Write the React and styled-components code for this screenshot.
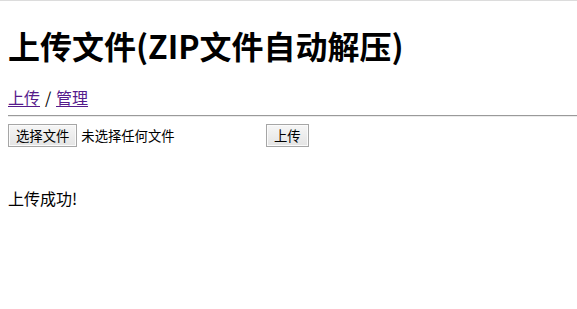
import React from 'react';
import styled, { createGlobalStyle } from 'styled-components';

const GlobalStyle = createGlobalStyle`
    html, body {
        margin: 0;
        padding: 0;
        background: #fff;
    }
    body {
        font-family: "Noto Sans CJK SC", "Noto Sans", sans-serif;
        color: #000;
    }
`;

const Page = styled.div`
    border-top: 1px solid #dcdcdc;
    padding: 0 8px;
`;

const Title = styled.h1`
    margin: 25.5px 0 23px;
    font-size: 32px;
    line-height: 37px;
    font-weight: 700;
`;

const Nav = styled.div`
    font-size: 16px;
    line-height: 20px;
`;

const NavLink = styled.a`
    color: #551a8b;
    text-decoration: underline;
    text-underline-offset: 2px;
`;

const Separator = styled.span`
    display: inline-block;
    width: 16px;
    text-align: center;
`;

const Rule = styled.hr`
    margin: 8.5px -8px 7px 0;
    height: 0;
    border: 0;
    border-top: 1px solid #9a9a9a;
    border-bottom: 1px solid #ececec;
`;

const Form = styled.form`
    display: flex;
    align-items: center;
    gap: 4px;
    height: 23px;
`;

const FilePicker = styled.label`
    display: flex;
    align-items: center;
    gap: 4px;
    width: 254px;
    font-size: 13.33px;
    cursor: pointer;

    input {
        display: none;
    }
`;

const Button = styled.span`
    box-sizing: border-box;
    display: inline-flex;
    align-items: center;
    justify-content: center;
    height: 23px;
    padding: 0 7px;
    margin: 0;
    font-family: inherit;
    font-size: 13.33px;
    line-height: 17px;
    color: #000;
    background: linear-gradient(#f6f6f6, #e4e4e4);
    border: 1px solid #a6a6a6;
    border-radius: 0;
    box-shadow: inset 0 0 0 1px #fbfbfb;
    white-space: nowrap;
`;

const FileName = styled.span`
    white-space: nowrap;
    color: #000;
`;

const Message = styled.div`
    margin-top: 41px;
    font-size: 16px;
    line-height: 20px;
`;

const App = () => {
    return (
        <Page>
            <GlobalStyle />
            <Title>上传文件(ZIP文件自动解压)</Title>
            <Nav>
                <NavLink href="#upload">上传</NavLink>
                <Separator>/</Separator>
                <NavLink href="#manage">管理</NavLink>
            </Nav>
            <Rule />
            <Form onSubmit={e => e.preventDefault()}>
                <FilePicker>
                    <input type="file" name="file" />
                    <Button>选择文件</Button>
                    <FileName>未选择任何文件</FileName>
                </FilePicker>
                <Button as="button" type="submit">上传</Button>
            </Form>
            <Message>上传成功!</Message>
        </Page>
    );
};

export default App;
